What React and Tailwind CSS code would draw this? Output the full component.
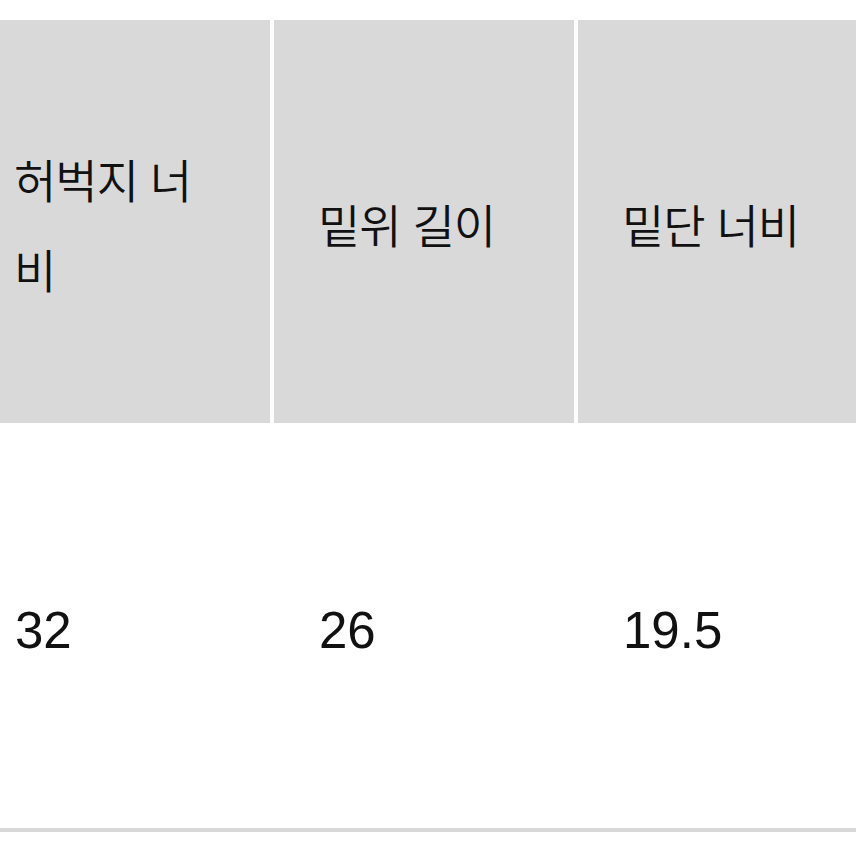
import React from 'react';

const columns = [
  { label: '허벅지 너비', value: '32' },
  { label: '밑위 길이', value: '26' },
  { label: '밑단 너비', value: '19.5' },
];

export default function App() {
  return (
    <div
      className="h-[856px] w-[856px] overflow-hidden bg-white pt-[20px] text-[#111]"
      style={{ fontFamily: '"Liberation Sans", "Noto Sans CJK KR", sans-serif' }}
    >
      <div className="-ml-[30px] w-[908px]">
        <div className="grid grid-cols-[300px_300px_300px] gap-x-[4px]">
          {columns.map((col) => (
            <div key={col.label} className="flex h-[403px] items-center bg-[#d9d9d9] pt-[10px] pl-[44px] pr-[46px]">
              <span className="text-[46px] font-[350] leading-[90px] tracking-[-1px]">{col.label}</span>
            </div>
          ))}
        </div>
        <div className="grid grid-cols-[300px_300px_300px] gap-x-[4px] border-b-[4px] border-[#d8d8d8]">
          {columns.map((col) => (
            <div key={col.label} className="flex h-[405px] items-center pt-[10px] pl-[45px] pr-[46px]">
              <span className="text-[51px] leading-[90px]">{col.value}</span>
            </div>
          ))}
        </div>
      </div>
    </div>
  );
}
